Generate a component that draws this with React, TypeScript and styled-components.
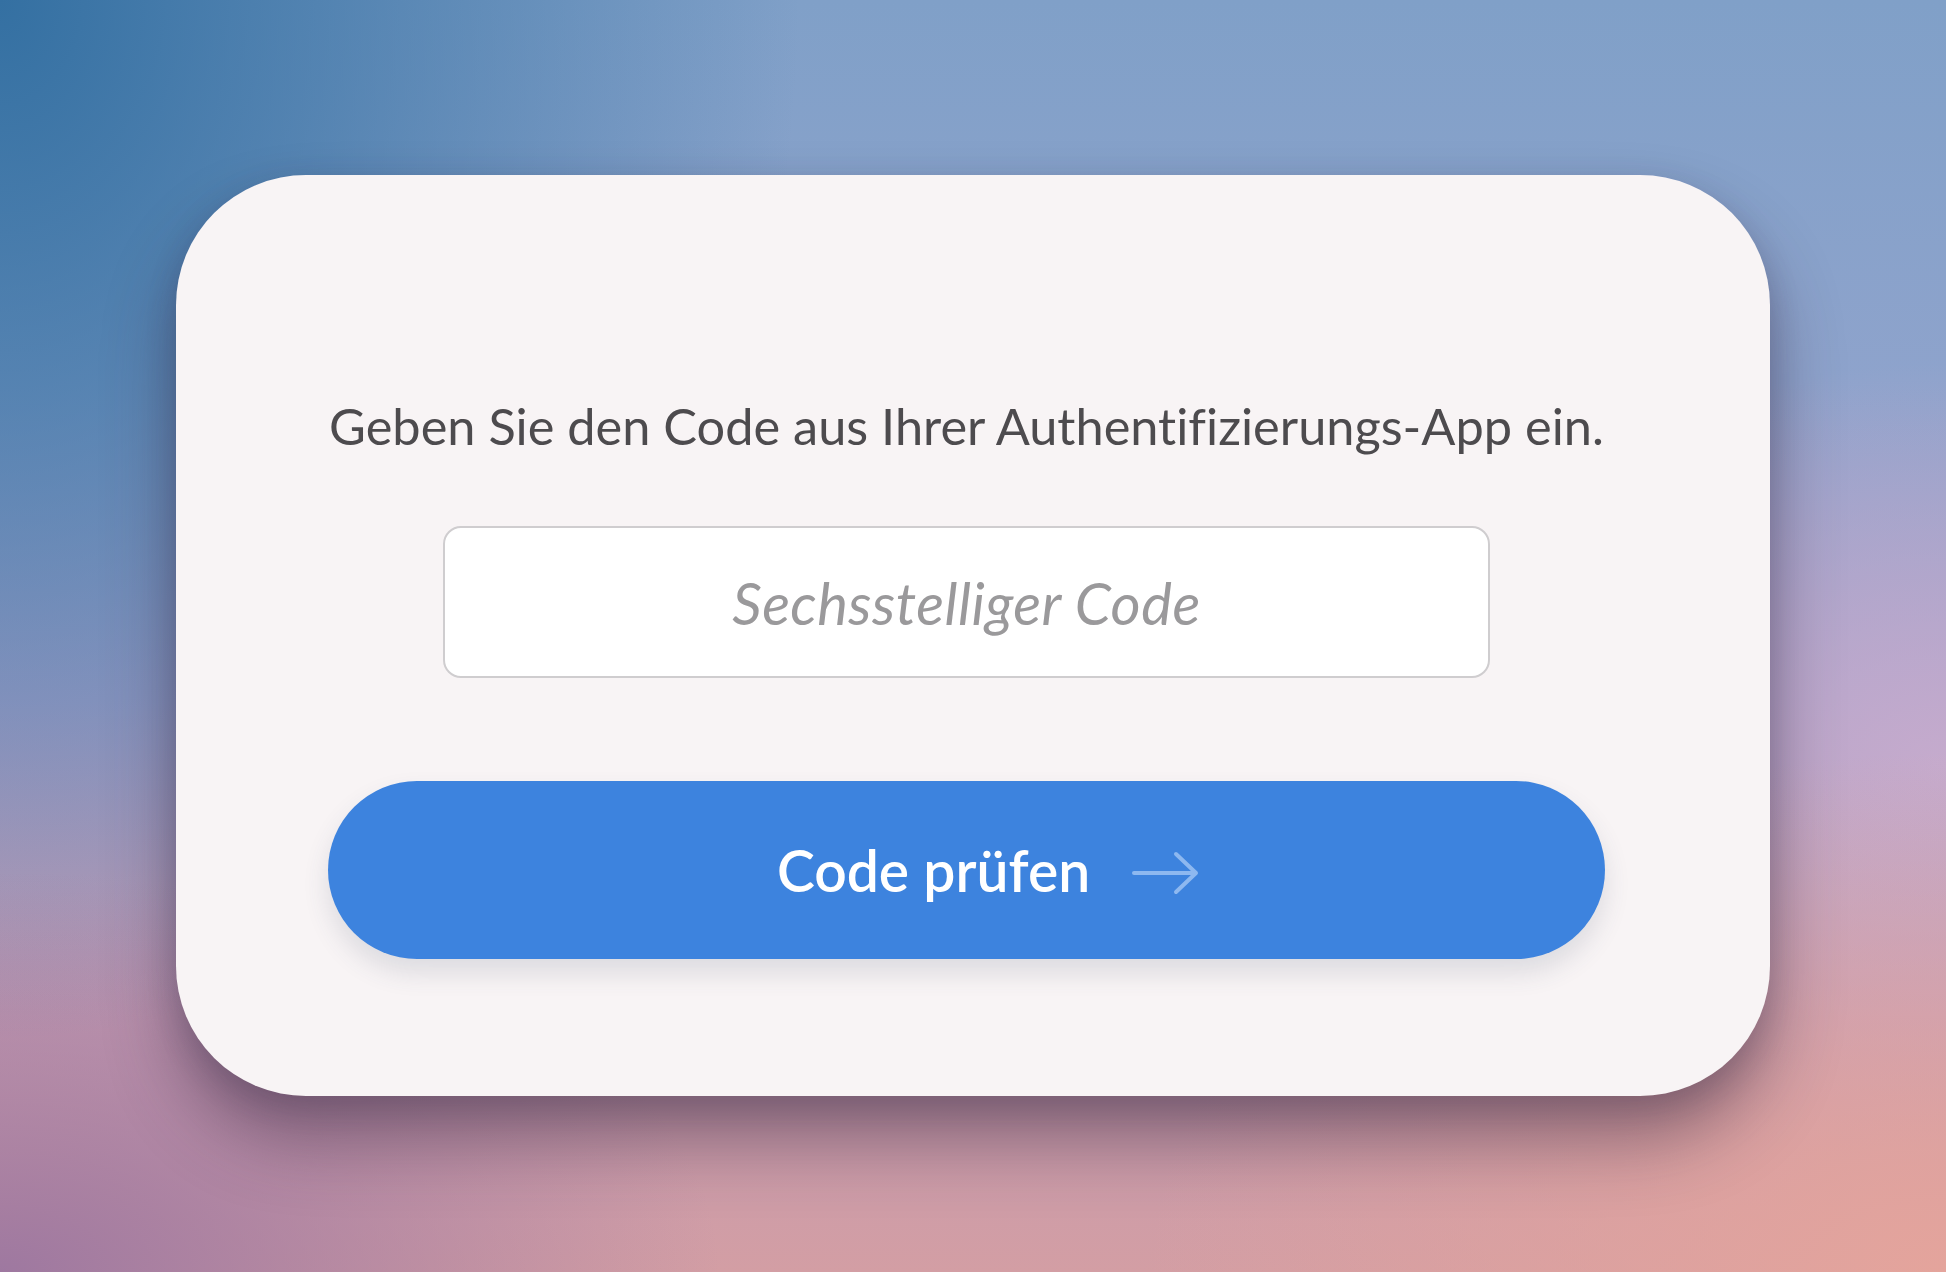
import React from "react";
import styled, { createGlobalStyle } from "styled-components";

const GlobalStyle = createGlobalStyle`
  html, body {
    margin: 0;
    padding: 0;
  }
  body {
    font-family: Lato, "Open Sans", sans-serif;
    overflow: hidden;
  }
`;

const Backdrop = styled.div`
  width: 1946px;
  height: 1272px;
  display: flex;
  align-items: flex-start;
  justify-content: center;
  box-sizing: border-box;
  padding-top: 175px;
  background:
    radial-gradient(ellipse 1000px 1300px at 0% 0%, rgba(52, 112, 162, 1), rgba(52, 112, 162, 0) 80%),
    radial-gradient(ellipse 1000px 650px at 100% 100%, rgba(228, 164, 156, 1), rgba(228, 164, 156, 0) 80%),
    radial-gradient(ellipse 900px 500px at 0% 100%, rgba(158, 120, 160, 1), rgba(158, 120, 160, 0) 80%),
    radial-gradient(ellipse 700px 500px at 100% 60%, rgba(200, 172, 206, 0.9), rgba(200, 172, 206, 0) 80%),
    linear-gradient(180deg, #80a0c8 0%, #8ea3cc 30%, #a5a0c8 55%, #c39ab0 80%, #d39ea4 100%);
`;

const Card = styled.div`
  width: 1594px;
  height: 921px;
  box-sizing: border-box;
  padding: 221px 165px 0 152px;
  background: #f8f4f5;
  border-radius: 130px;
  box-shadow: 0 44px 70px rgba(50, 35, 60, 0.45), 0 10px 30px rgba(40, 40, 70, 0.18);
  display: flex;
  flex-direction: column;
  align-items: center;
`;

const Prompt = styled.p`
  margin: 0;
  font-size: 50.5px;
  line-height: 60px;
  color: #4d4b4e;
  white-space: nowrap;
  font-variant-ligatures: none;
`;

const CodeInput = styled.input`
  margin-top: 70px;
  width: 1047px;
  height: 152px;
  box-sizing: border-box;
  border: 2px solid #cfcdcf;
  border-radius: 18px;
  background: #ffffff;
  text-align: center;
  font-family: Lato, "Open Sans", sans-serif;
  font-size: 58px;
  color: #444;
  outline: none;

  &::placeholder {
    font-style: italic;
    color: #9a999b;
    letter-spacing: 0.5px;
  }
`;

const SubmitButton = styled.button`
  margin-top: 103px;
  width: 1277px;
  height: 178px;
  box-sizing: border-box;
  padding: 0 0 0 44px;
  border: 0;
  border-radius: 89px;
  background: #3d83de;
  color: #ffffff;
  display: flex;
  align-items: center;
  justify-content: center;
  gap: 42px;
  font-family: Lato, "Open Sans", sans-serif;
  font-size: 57px;
  font-weight: 600;
  cursor: pointer;
  box-shadow: 0 14px 26px rgba(60, 70, 100, 0.14);
`;

const ButtonLabel = styled.span`
  line-height: 1;
`;

const ArrowIcon = styled.svg`
  display: block;
  margin-top: 6px;
`;

const Arrow = () => (
  <ArrowIcon width="68" height="44" viewBox="0 0 68 44" fill="none">
    <path
      d="M2 22 H64 M44 3 L64 22 L44 41"
      stroke="#8db8f0"
      strokeWidth="4"
      strokeLinecap="round"
      strokeLinejoin="round"
    />
  </ArrowIcon>
);

export default function App() {
  return (
    <>
      <GlobalStyle />
      <Backdrop>
        <Card>
          <Prompt>Geben Sie den Code aus Ihrer Authentifizierungs-App ein.</Prompt>
          <CodeInput placeholder="Sechsstelliger Code" inputMode="numeric" maxLength={6} />
          <SubmitButton>
            <ButtonLabel>Code prüfen</ButtonLabel>
            <Arrow />
          </SubmitButton>
        </Card>
      </Backdrop>
    </>
  );
}
